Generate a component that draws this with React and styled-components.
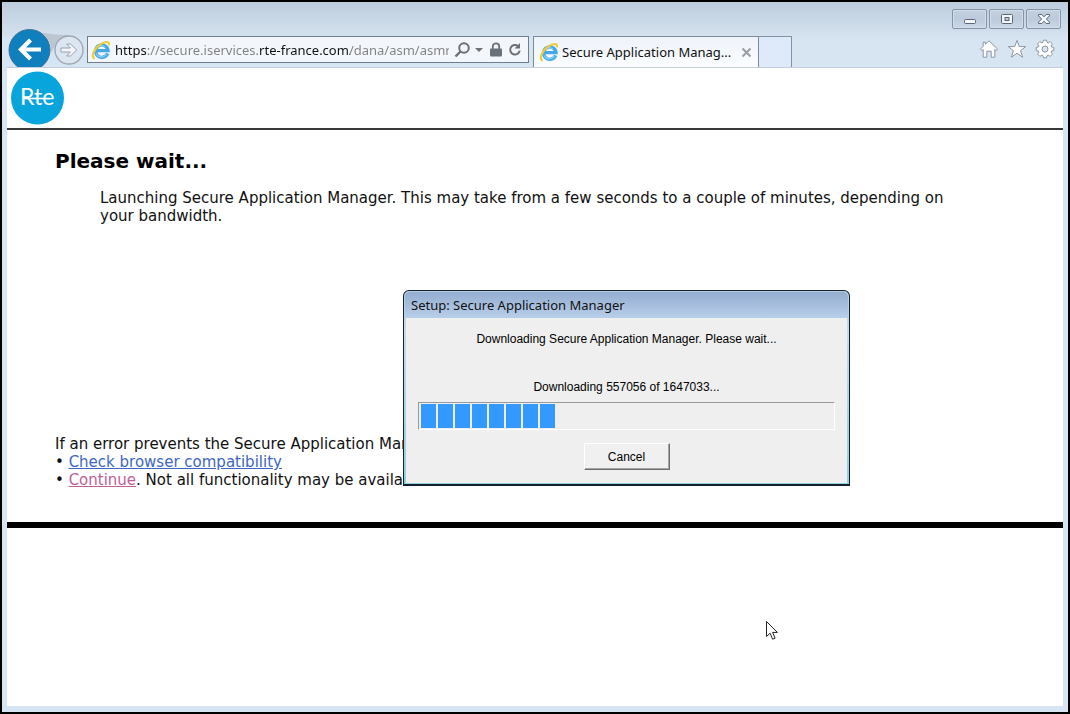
import React from 'react';
import styled, { createGlobalStyle } from 'styled-components';

const DOWNLOADED = 557056;
const TOTAL = 1647033;

const GlobalStyle = createGlobalStyle`
  * {
    box-sizing: border-box;
  }

  body {
    margin: 0;
    background: #fff;
  }
`;

const Window = styled.div`
  position: relative;
  display: flex;
  flex-direction: column;
  min-height: 100vh;
  padding: 0 5px 6px;
  border: 2px solid #000;
  background: linear-gradient(#bccddd, #d7e4f1 38px, #d7e4f1);
  font-family: 'Noto Sans', 'Open Sans', sans-serif;
  font-size: 13px;
  color: #111;
`;

const TitleBar = styled.div`
  display: flex;
  justify-content: flex-end;
  gap: 2px;
  height: 27px;
  padding: 7px 2px 0 0;
`;

const WindowButton = styled.button`
  display: flex;
  align-items: center;
  justify-content: center;
  width: 35px;
  height: 20px;
  padding: 0;
  border: 1px solid #8593a8;
  border-radius: 2px;
  background: linear-gradient(#c3d0e0, #bccadb 50%, #c9d7e6);
  box-shadow: inset 0 0 0 1px #d3deea;
`;

const NavBar = styled.div`
  display: flex;
  height: 38px;
  padding-left: 1px;
  overflow: hidden;
`;

const NavButton = styled.button`
  display: block;
  flex: none;
  height: 42px;
  padding: 0;
  border: 0;
  background: none;

  svg {
    display: block;
    overflow: visible;
  }
`;

const AddressBar = styled.form`
  display: flex;
  align-items: center;
  flex: 0 1 442px;
  gap: 4px;
  height: 27px;
  margin: 7px 4px 0 2px;
  padding: 0 5px 0 3px;
  border: 1px solid #6f7d8c;
  background: #f3f7fc;
`;

/* The protocol and the domain are black, the rest of the address is grey */
const AddressInput = styled.input`
  flex: 1;
  min-width: 0;
  height: 24px;
  padding: 0;
  border: 0;
  outline: 0;
  background: linear-gradient(
    to right,
    #111 32px,
    #808080 32px,
    #808080 144px,
    #111 144px,
    #111 235px,
    #808080 235px
  );
  background-clip: text;
  color: transparent;
  font: 13px 'Noto Sans', 'Open Sans', sans-serif;
`;

const IconButton = styled.button`
  display: flex;
  flex: none;
  padding: 0;
  border: 0;
  background: none;
`;

const Tab = styled.div`
  display: flex;
  align-items: center;
  flex: 0 1 226px;
  gap: 3px;
  margin-top: 7px;
  padding: 0 6px 0 5px;
  border: 1px solid #7a8a9b;
  border-bottom: 0;
  background: linear-gradient(#eef3fa, #fbfdff);
`;

const TabTitle = styled.span`
  flex: 1;
  white-space: nowrap;
`;

const NewTab = styled.button`
  width: 33px;
  margin-top: 7px;
  padding: 0;
  border: 1px solid #8493a4;
  border-width: 1px 1px 0 0;
  background: #deeafa;
`;

const Tools = styled.div`
  display: flex;
  gap: 8px;
  margin: 10px 8px 0 auto;
  height: 20px;
`;

const Page = styled.main`
  flex: 1;
  border-top: 1px solid #c3cfdd;
  background: #fff;
  font: 15px/18px Verdana, 'DejaVu Sans', sans-serif;
`;

const Header = styled.header`
  padding: 3px;
  border-bottom: 2px solid #38383a;

  svg {
    display: block;
  }
`;

const Content = styled.section`
  padding: 18px 100px 33px 48px;
  border-bottom: 6px solid #000;
`;

const Heading = styled.h1`
  margin: 0 0 15px;
  font-size: 20px;
  line-height: 26px;
  color: #000;
`;

const Message = styled.p`
  min-height: 246px;
  margin: 0 0 0 45px;
`;

const Notes = styled.div`
  p,
  ul {
    margin: 0;
    padding: 0;
    list-style: none;
  }

  li::before {
    content: '• ';
  }
`;

const Link = styled.a`
  color: ${props => (props.$visited ? '#c0609a' : '#3f66c4')};
`;

const Dialog = styled.div`
  position: absolute;
  top: 288px;
  left: 401px;
  width: 447px;
  padding: 1px;
  border: 1px solid #14202e;
  border-width: 1px 1px 2px 1px;
  border-radius: 6px 6px 0 0;
  background: linear-gradient(#b5cbe4, #c6daf0 40px, #8fd0dc);
`;

const DialogTitle = styled.h2`
  margin: 0;
  padding: 0 6px;
  border-radius: 5px 5px 0 0;
  background: linear-gradient(#94add0, #b8cfea);
  font-size: 13px;
  font-weight: normal;
  line-height: 26px;
`;

const DialogBody = styled.div`
  display: flex;
  flex-direction: column;
  align-items: center;
  margin: 0 1px;
  padding: 13px 12px 13px;
  background: #efefef;
  font: 12px/16px 'Liberation Sans', Arial, sans-serif;
  color: #000;

  p {
    margin: 0 0 32px;
  }

  p + p {
    margin-bottom: 7px;
  }
`;

const ProgressTrack = styled.div`
  display: flex;
  gap: 2px;
  width: 100%;
  height: 28px;
  margin-bottom: 13px;
  padding: 1px 2px;
  border: 1px solid;
  border-color: #9a9a9a #fff #fff #9a9a9a;
`;

const ProgressBlock = styled.span`
  width: 15px;
  height: 24px;
  background: #3399ff;
`;

const CancelButton = styled.button`
  width: 86px;
  height: 27px;
  padding: 0;
  border: 1px solid;
  border-color: #fff #6e6e6e #6e6e6e #fff;
  background: #f0f0f0;
  box-shadow: inset -1px -1px 0 #a5a5a5;
  font: inherit;
`;

const Cursor = styled.svg`
  position: absolute;
  top: 618px;
  left: 763px;
`;

const ExplorerIcon = () => (
  <svg width="20" height="20" viewBox="0 0 20 20" aria-hidden="true">
    <path d="M16.6 13.4A6.2 6.2 0 1 1 17 10.6H6" fill="none" stroke="#45a8e8" strokeWidth="3.4" />
    <path d="M15.5 14A6 6 0 0 1 5 13.5M6 7.5A5.6 5.6 0 0 1 14 7" fill="none" stroke="#86cdf5" strokeWidth="1.2" />
    <path d="M3.8 18.4C-.4 17.8 2.4 9.4 9 4.6 13.8 1.2 19.2.8 17.8 5.4" fill="none" stroke="#f0cb3a" strokeWidth="2.2" />
  </svg>
);

const segments = Math.round((DOWNLOADED / TOTAL) * 24);

const App = () => (
  <>
    <GlobalStyle />
    <Window>
      <TitleBar>
        <WindowButton aria-label="Minimize">
          <svg width="14" height="12" viewBox="0 0 14 12">
            <rect x="1.5" y="6.5" width="11" height="4" rx="1" fill="#f4f6f9" stroke="#5b6677" />
          </svg>
        </WindowButton>
        <WindowButton aria-label="Maximize">
          <svg width="14" height="12" viewBox="0 0 14 12">
            <rect x="1.5" y="1.5" width="11" height="9" rx="1" fill="#f4f6f9" stroke="#5b6677" />
            <rect x="5" y="4.5" width="4" height="3" fill="#c0ccdb" stroke="#5b6677" />
          </svg>
        </WindowButton>
        <WindowButton aria-label="Close">
          <svg width="14" height="12" viewBox="0 0 14 12">
            <path d="M1.5 1.5h3.3L7 3.8l2.2-2.3h3.3v1.3L9.4 6l3.1 3.2v1.3H9.2L7 8.2l-2.2 2.3H1.5V9.2L4.6 6 1.5 2.8z" fill="#f4f6f9" stroke="#5b6677" />
          </svg>
        </WindowButton>
      </TitleBar>

      <NavBar>
        <NavButton aria-label="Back">
          <svg width="43" height="42" viewBox="0 0 43 42">
            <circle cx="21.5" cy="21" r="20.5" fill="#0f7fbe" stroke="#3f7095" />
            <path d="M33 20.5H13M22.5 11l-9.5 9.5 9.5 9.5" fill="none" stroke="#fff" strokeWidth="4.2" />
          </svg>
        </NavButton>
        <NavButton aria-label="Forward">
          <svg width="34" height="42" viewBox="0 0 34 42">
            <path d="M-10 3.4Q3 6 18 6L6 14Q3 18 0 24A21 21 0 0 0-10 3.4z" fill="#bcc5d0" />
            <circle cx="18" cy="21" r="14" fill="#dce6f1" stroke="#9fa9b5" strokeWidth="1.4" />
            <path d="M10 19h9.4l-3.7-4h3.7l6.4 6-6.4 6h-3.7l3.7-4H10z" fill="#f2f6fb" stroke="#98a2ae" />
          </svg>
        </NavButton>

        <AddressBar onSubmit={event => event.preventDefault()}>
          <ExplorerIcon />
          <AddressInput
            type="text"
            aria-label="Address"
            spellCheck="false"
            defaultValue="https://secure.iservices.rte-france.com/dana/asm/asmru"
          />
          <IconButton type="button" aria-label="Search">
            <svg width="32" height="18" viewBox="0 0 32 18">
              <circle cx="11" cy="7" r="4.8" fill="none" stroke="#6b7178" strokeWidth="2" />
              <path d="M7.5 10.5L2.5 15.5" stroke="#6b7178" strokeWidth="2.4" />
              <path d="M22 7h8l-4 4z" fill="#6b7178" />
            </svg>
          </IconButton>
          <IconButton type="button" aria-label="Security report">
            <svg width="14" height="18" viewBox="0 0 14 18">
              <path d="M3.8 8V5.5a3.2 3.2 0 0 1 6.4 0V8" fill="none" stroke="#6b7178" strokeWidth="1.8" />
              <rect x="1" y="7.5" width="12" height="8" rx="1" fill="#6b7178" />
            </svg>
          </IconButton>
          <IconButton type="button" aria-label="Refresh">
            <svg width="16" height="18" viewBox="0 0 16 18">
              <path d="M11 5A4.8 4.8 0 1 0 12.7 9.6" fill="none" stroke="#6b7178" strokeWidth="2" />
              <path d="M13 2v5.5H7.6z" fill="#6b7178" />
            </svg>
          </IconButton>
        </AddressBar>

        <Tab>
          <ExplorerIcon />
          <TabTitle>Secure Application Manag...</TabTitle>
          <IconButton aria-label="Close tab">
            <svg width="11" height="11" viewBox="0 0 11 11">
              <path d="M1.5 1.5l8 8M9.5 1.5l-8 8" stroke="#9a9ea4" strokeWidth="2" />
            </svg>
          </IconButton>
        </Tab>
        <NewTab aria-label="New tab" />

        <Tools>
          <IconButton aria-label="Home">
            <svg width="20" height="20" viewBox="0 0 20 20">
              <path d="M10 1.8l8.6 8.4-1.5 1.4-1.3-1.2v7.8h-3.6v-6H7.8v6H4.2v-7.8l-1.3 1.2-1.5-1.4 2.8-2.8V3.2h2.4v2z" fill="#fff" stroke="#8c96a3" />
            </svg>
          </IconButton>
          <IconButton aria-label="Favorites">
            <svg width="20" height="20" viewBox="0 0 20 20">
              <path d="M10 1.4l2.3 6.2h6.4l-5.1 4.1 2 6.5-5.6-3.9-5.6 3.9 2-6.5L1.3 7.6h6.4z" fill="#fff" stroke="#8c96a3" />
            </svg>
          </IconButton>
          <IconButton aria-label="Settings">
            <svg width="20" height="20" viewBox="0 0 20 20">
              <path
                d="M8.4 1.2h3.2l.4 2.2 1.2.5 1.9-1.3 2.3 2.3-1.3 1.9.5 1.2 2.2.4v3.2l-2.2.4-.5 1.2 1.3 1.9-2.3 2.3-1.9-1.3-1.2.5-.4 2.2H8.4L8 16.6l-1.2-.5-1.9 1.3-2.3-2.3 1.3-1.9-.5-1.2-2.2-.4V8.4l2.2-.4.5-1.2-1.3-1.9 2.3-2.3 1.9 1.3 1.2-.5z"
                fill="#fff"
                stroke="#8c96a3"
              />
              <circle cx="10" cy="10" r="3" fill="#d7e4f1" stroke="#8c96a3" />
            </svg>
          </IconButton>
        </Tools>
      </NavBar>

      <Page>
        <Header>
          <svg width="54" height="54" viewBox="0 0 54 54" role="img" aria-label="Rte">
            <circle cx="27.5" cy="27" r="26.5" fill="#08a5dc" />
            <text x="10" y="34" fill="#fff" fontFamily="Lato, sans-serif" fontSize="23">Rte</text>
            <path d="M14 27.500h26" stroke="#fff" strokeWidth="1.600" />
          </svg>
        </Header>
        <Content>
          <Heading>Please wait...</Heading>
          <Message>
            Launching Secure Application Manager. This may take from a few seconds to a couple of minutes, depending on
            your bandwidth.
          </Message>
          <Notes>
            <p>If an error prevents the Secure Application Manager</p>
            <ul>
              <li><Link href="#compatibility">Check browser compatibility</Link></li>
              <li><Link href="#continue" $visited>Continue</Link>. Not all functionality may be available.</li>
            </ul>
          </Notes>
        </Content>
      </Page>

      <Dialog role="dialog" aria-labelledby="setup-title">
        <DialogTitle id="setup-title">Setup: Secure Application Manager</DialogTitle>
        <DialogBody>
          <p>Downloading Secure Application Manager. Please wait...</p>
          <p>Downloading {DOWNLOADED} of {TOTAL}...</p>
          <ProgressTrack
            role="progressbar"
            aria-label="Download progress"
            aria-valuemin={0}
            aria-valuenow={DOWNLOADED}
            aria-valuemax={TOTAL}
          >
            {Array.from({ length: segments }, (_, i) => <ProgressBlock key={i} />)}
          </ProgressTrack>
          <CancelButton type="button">Cancel</CancelButton>
        </DialogBody>
      </Dialog>

      <Cursor width="14" height="21" viewBox="0 0 14 21" aria-hidden="true">
        <path d="M1.5 1.5v15l3.6-3.3 2.5 6 2.5-1-2.5-5.8h4.8z" fill="#fff" stroke="#222" />
      </Cursor>
    </Window>
  </>
);

export default App;
